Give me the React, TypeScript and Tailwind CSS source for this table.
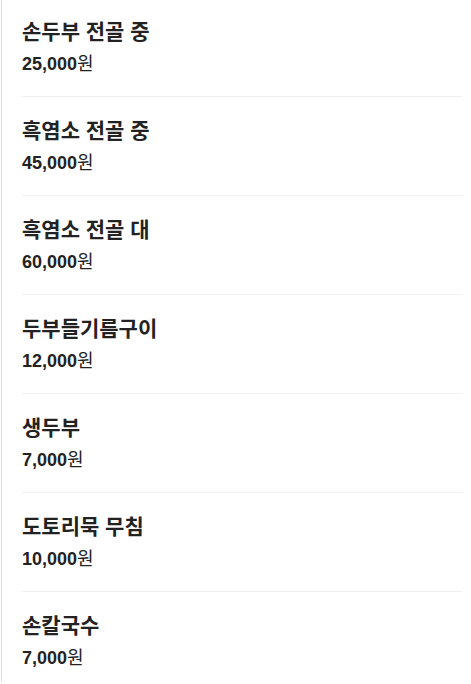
const menu = [
  { name: '손두부 전골 중', price: '25,000' },
  { name: '흑염소 전골 중', price: '45,000' },
  { name: '흑염소 전골 대', price: '60,000' },
  { name: '두부들기름구이', price: '12,000' },
  { name: '생두부', price: '7,000' },
  { name: '도토리묵 무침', price: '10,000' },
  { name: '손칼국수', price: '7,000' },
];

export default function App() {
  return (
    <div
      className="h-[684px] overflow-hidden bg-white"
      style={{ fontFamily: '"Liberation Sans", "Noto Sans CJK KR", sans-serif' }}
    >
      <div className="ml-px h-full border-l border-[#dddddd] pl-[20px] pr-2">
        <ul className="-mt-[2px]">
          {menu.map((item) => (
            <li key={item.name} className="border-b border-[#f0f0f0] py-5">
              <p className="text-[21px] leading-7 font-bold text-[#222222]">{item.name}</p>
              <p className="mt-1.5 text-[18px] leading-6 text-[#222222]">
                <span className="font-bold">{item.price}</span>
                <span>원</span>
              </p>
            </li>
          ))}
        </ul>
      </div>
    </div>
  );
}
